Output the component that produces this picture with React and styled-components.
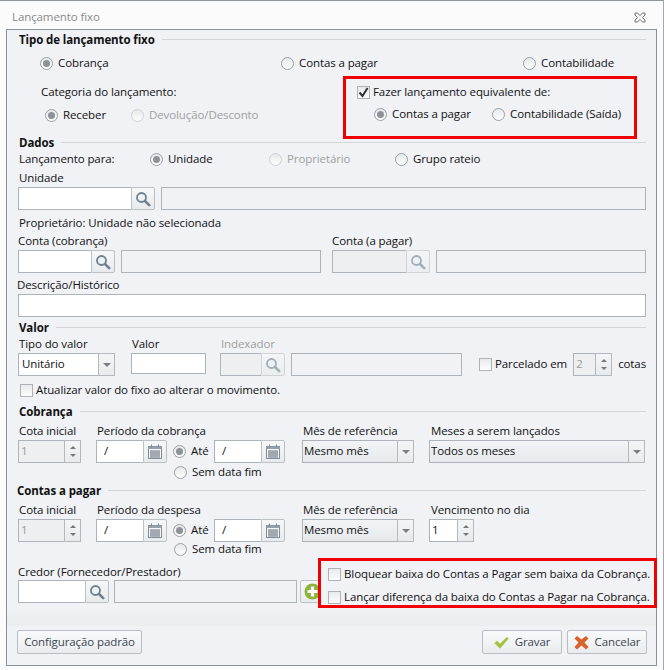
import React from 'react';
import styled, { createGlobalStyle } from 'styled-components';

const GlobalStyle = createGlobalStyle`
  html, body {
    margin: 0;
    background: #fbfbfc;
  }
  * {
    box-sizing: border-box;
  }
`;

const Window = styled.div`
  width: 664px;
  height: 670px;
  overflow: hidden;
  position: relative;
  background: #fbfbfc;
  border-top: 1px solid #8f949a;
  border-right: 1px solid #a4a8ad;
  font-family: "Open Sans", "Noto Sans", sans-serif;
  font-size: 11.5px;
  letter-spacing: -0.1px;
  color: #111;
`;

const TitleBar = styled.div`
  height: 28px;
  padding: 4px 17px 0 12px;
  display: flex;
  align-items: center;
  justify-content: space-between;
  color: #8a8a8a;
`;

const Panel = styled.div`
  position: relative;
  width: 651px;
  height: 637px;
  margin-left: 6px;
  padding-left: 11px;
  background: #f0f2f6;
  border: 1px solid #8b9199;
`;

const Row = styled.div`
  display: flex;
  align-items: center;
  height: ${({ $h }) => $h || 14}px;
  margin-top: ${({ $mt }) => $mt || 0}px;
  white-space: nowrap;
`;

const SectionRow = styled.div`
  display: flex;
  align-items: center;
  gap: 7px;
  height: ${({ $h }) => $h || 10}px;
  margin-top: ${({ $mt }) => $mt || 0}px;
  margin-left: ${({ $ml }) => $ml ?? 1}px;
  padding-right: 10px;
  font-weight: 700;
  white-space: nowrap;

  &::after {
    content: '';
    flex: 1;
    height: 1px;
    margin-top: -2px;
    background: #d3d7dc;
  }
`;

/* the font sits a pixel lower than the original's, the bottom margin lifts it */
const Text = styled.span`
  width: ${({ $w }) => ($w ? `${$w}px` : 'auto')};
  margin-left: ${({ $ml }) => $ml || 0}px;
  margin-bottom: 2px;
  flex: none;
  color: ${({ $off }) => ($off ? '#a0a0a0' : 'inherit')};
`;

const RadioWrap = styled.span`
  display: inline-flex;
  align-items: center;
  gap: 5px;
  flex: none;
  width: ${({ $w }) => ($w ? `${$w}px` : 'auto')};
  margin-left: ${({ $ml }) => $ml || 0}px;
  color: ${({ $off }) => ($off ? '#a0a0a0' : 'inherit')};
`;

const Dot = styled.span`
  position: relative;
  width: 13px;
  height: 13px;
  flex: none;
  border-radius: 50%;
  border: 1px solid ${({ $off }) => ($off ? '#cdd0d4' : '#9aa0a6')};
  background: linear-gradient(#e6e8ea, #fdfdfd);

  &::after {
    content: '';
    display: ${({ $on }) => ($on ? 'block' : 'none')};
    position: absolute;
    inset: 2px;
    border-radius: 50%;
    background: #8d9298;
  }
`;

const Box = styled.span`
  display: inline-flex;
  align-items: center;
  justify-content: center;
  width: 13px;
  height: 13px;
  flex: none;
  border: 1px solid #aeb3b9;
  background: linear-gradient(#e8eaec, #fdfdfd);
  margin-left: ${({ $ml }) => $ml || 0}px;
  margin-right: 3px;
`;

const Input = styled.div`
  flex: none;
  align-self: flex-start;
  width: ${({ $w }) => ($w ? `${$w}px` : '100%')};
  height: ${({ $h }) => $h || 23}px;
  margin-left: ${({ $ml }) => $ml || 0}px;
  background: ${({ $bg }) => $bg || '#fff'};
  border: 1px solid #adb3ba;
`;

const Group = styled.div`
  display: flex;
  flex: none;
  width: ${({ $w }) => $w}px;
  height: 23px;
  margin-left: ${({ $ml }) => $ml || 0}px;
`;

const GroupField = styled.div`
  flex: 1;
  display: flex;
  align-items: center;
  padding-left: ${({ $pad }) => $pad ?? 3}px;
  background: ${({ $bg }) => $bg || '#fff'};
  border: 1px solid #adb3ba;
  border-right: none;
  color: ${({ $off }) => ($off ? '#9a9a9a' : 'inherit')};
`;

const SideButton = styled.div`
  display: flex;
  align-items: center;
  justify-content: center;
  flex: none;
  width: 24px;
  background: linear-gradient(#f6f7f8, #e8ebee);
  border: 1px solid #bcc1c6;
  border-radius: 0 2px 2px 0;
  opacity: ${({ $off }) => ($off ? 0.6 : 1)};
`;

const AddButton = styled(SideButton)`
  height: 23px;
  margin-left: 3px;
  border-radius: 2px;
`;

const SpinCol = styled.div`
  display: flex;
  flex-direction: column;
  align-items: center;
  justify-content: center;
  gap: 5px;
  flex: none;
  width: 17px;
  background: linear-gradient(#f4f5f7, #e8ebee);
  border: 1px solid #b4b9bf;
`;

const Caret = styled.span`
  width: 0;
  height: 0;
  border-left: 3px solid transparent;
  border-right: 3px solid transparent;
  border-top: ${({ $up }) => ($up ? 'none' : '3px solid #777')};
  border-bottom: ${({ $up }) => ($up ? '3px solid #777' : 'none')};
`;

const SelectArrow = styled(Caret)`
  border-left-width: 4px;
  border-right-width: 4px;
  border-top-width: 4px;
  border-top-color: #7a7f85;
`;

const Block = styled.div`
  display: flex;
  height: 63px;
`;

const Categoria = styled.div`
  width: 326px;
  flex: none;
`;

const RedBox = styled.div`
  width: 294px;
  height: 63px;
  margin-left: -1px;
  padding: 5px 0 0 11px;
  border: 3px solid #f00000;
`;

const OverlayBox = styled.div`
  position: absolute;
  left: 311px;
  top: 528px;
  width: 339px;
  height: 50px;
  padding: 6px 0 0 7px;
  border: 3px solid #f00000;
  background: #f0f2f6;
  white-space: nowrap;
`;

const Band = styled.div`
  height: 16px;
  margin: 7px 0 0 -11px;
  background: linear-gradient(#f0f1f3, #ecedef);
`;

const Footer = styled.div`
  display: flex;
  align-items: center;
  height: 24px;
  margin-top: 4px;
  margin-left: -1px;
  padding-right: 9px;
`;

const FootButton = styled.div`
  display: flex;
  align-items: center;
  justify-content: center;
  gap: 6px;
  flex: none;
  width: ${({ $w }) => $w}px;
  height: 24px;
  margin-left: ${({ $ml }) => $ml || 0}px;
  border: 1px solid #b9bec4;
  border-radius: 2px;
  background: linear-gradient(#f9fafb, #e9ecef);
  color: #3a4650;
  ${({ $auto }) => ($auto ? 'margin-left: auto;' : '')}
`;

const Search = () => (
  <svg width="16" height="16" viewBox="0 0 16 16">
    <circle cx="6.5" cy="6.5" r="4.5" fill="#eef3f6" stroke="#71808c" strokeWidth="1.8" />
    <path d="M10 10l4.2 4.2" stroke="#71808c" strokeWidth="2.6" strokeLinecap="round" />
  </svg>
);

const Calendar = () => (
  <svg width="16" height="16" viewBox="0 0 16 16">
    <rect x="1.5" y="2.5" width="13" height="12" fill="#f4f5f6" stroke="#838c95" />
    <rect x="1.5" y="2.5" width="13" height="2.5" fill="#98a1a9" />
    <path d="M4.5 0.5v3M11.5 0.5v3" stroke="#7f8892" />
    <path
      d="M3 7h10M3 9h10M3 11h10M3 13h10M4 6.5v7M6 6.5v7M8 6.5v7M10 6.5v7M12 6.5v7"
      stroke="#7f8892"
      strokeWidth="0.9"
    />
  </svg>
);

const Plus = () => (
  <svg width="17" height="17" viewBox="0 0 17 17">
    <circle cx="8.5" cy="8.5" r="8" fill="#8db33a" />
    <path d="M8.5 3.5v10M3.5 8.5h10" stroke="#fff" strokeWidth="3.2" />
  </svg>
);

const Check = () => (
  <svg width="15" height="13" viewBox="0 0 15 13">
    <path d="M0.5 7l2.5-2 3 2.8L13 1l1.5 1.5L6 12.5z" fill="#a3bf3f" stroke="#c0d467" strokeWidth="0.6" />
  </svg>
);

const Cross = () => (
  <svg width="15" height="15" viewBox="0 0 15 15">
    <path d="M3 1l4.5 3.5L12 1l2.5 2.5L10.5 7.5l4 4.5-2.5 2.5-4.5-4-4.5 4L0.5 12l4-4.5L0.5 3.5z" fill="#d9622b" />
  </svg>
);

const CloseX = () => (
  <svg width="12" height="11" viewBox="0 0 12 11">
    <path
      d="M1 1h2.5L6 3.5 8.5 1H11v2L8.5 5.5 11 8v2H8.5L6 7.5 3.5 10H1V8l2.5-2.5L1 3z"
      fill="#f6f6f6"
      stroke="#6f6f6f"
      strokeWidth="1"
    />
  </svg>
);

const Tick = () => (
  <svg width="11" height="11" viewBox="0 0 11 11">
    <path d="M1.5 5.5l3 3.5 5-8" fill="none" stroke="#333" strokeWidth="2" />
  </svg>
);

const Section = ({ children, ...rest }) => (
  <SectionRow {...rest}>
    <Text>{children}</Text>
  </SectionRow>
);

const Radio = ({ on, off, children, w, ml }) => (
  <RadioWrap $off={off} $w={w} $ml={ml}>
    <Dot $on={on} $off={off} />
    <Text>{children}</Text>
  </RadioWrap>
);

const Lookup = ({ w, ml, off }) => (
  <Group $w={w} $ml={ml}>
    <GroupField $bg={off ? '#eeeff1' : '#fff'} />
    <SideButton $off={off}>
      <Search />
    </SideButton>
  </Group>
);

const DateField = ({ w, ml }) => (
  <Group $w={w} $ml={ml}>
    <GroupField $pad={7}>
      <Text>/</Text>
    </GroupField>
    <SideButton>
      <Calendar />
    </SideButton>
  </Group>
);

const Spinner = ({ w, ml, off, value }) => (
  <Group $w={w} $ml={ml}>
    <GroupField $off={off} $bg={off ? '#eeeff1' : '#fff'} $pad={2}>
      <Text>{value}</Text>
    </GroupField>
    <SpinCol>
      <Caret $up />
      <Caret />
    </SpinCol>
  </Group>
);

const Select = ({ w, ml, bg, pad, children }) => (
  <Group $w={w} $ml={ml}>
    <GroupField $bg={bg} $pad={pad}>
      <Text>{children}</Text>
    </GroupField>
    <SpinCol>
      <SelectArrow />
    </SpinCol>
  </Group>
);

const grey = 'linear-gradient(#f2f4f6, #e6e9ec)';

const App = () => (
  <>
    <GlobalStyle />
    <Window>
      <TitleBar>
        <Text>Lançamento fixo</Text>
        <CloseX />
      </TitleBar>
      <Panel>
        <Section $h={20}>Tipo de lançamento fixo</Section>
        <Row $h={26}>
          <Radio on w={241} ml={22}>Cobrança</Radio>
          <Radio w={242}>Contas a pagar</Radio>
          <Radio>Contabilidade</Radio>
        </Row>
        <Block>
          <Categoria>
            <Row $mt={9}>
              <Text $ml={23}>Categoria do lançamento:</Text>
            </Row>
            <Row $mt={9}>
              <Radio on w={86} ml={27}>Receber</Radio>
              <Radio off>Devolução/Desconto</Radio>
            </Row>
          </Categoria>
          <RedBox>
            <Row $h={16}>
              <Box><Tick /></Box>
              <Text>Fazer lançamento equivalente de:</Text>
            </Row>
            <Row $mt={7}>
              <Radio on w={118} ml={17}>Contas a pagar</Radio>
              <Radio>Contabilidade (Saída)</Radio>
            </Row>
          </RedBox>
        </Block>
        <Section $h={8}>Dados</Section>
        <Row $h={24}>
          <Text $w={131} $ml={1}>Lançamento para:</Text>
          <Radio on w={119}>Unidade</Radio>
          <Radio off w={126}>Proprietário</Radio>
          <Radio>Grupo rateio</Radio>
        </Row>
        <Row><Text $ml={1}>Unidade</Text></Row>
        <Row $h={23} $mt={2}>
          <Lookup w={137} />
          <Input $w={485} $ml={6} $bg="#f0f2f6" />
        </Row>
        <Row $mt={6}><Text $ml={1}>Proprietário: Unidade não selecionada</Text></Row>
        <Row $mt={4}>
          <Text $w={314}>Conta (cobrança)</Text>
          <Text>Conta (a pagar)</Text>
        </Row>
        <Row $h={23} $mt={2}>
          <Lookup w={97} />
          <Input $w={200} $ml={6} $bg="#f0f2f6" />
          <Lookup w={98} ml={11} off />
          <Input $w={210} $ml={6} $bg="#f0f2f6" />
        </Row>
        <Row $mt={5}><Text $ml={-1}>Descrição/Histórico</Text></Row>
        <Row $h={23} $mt={2}>
          <Input $w={628} />
        </Row>
        <Section $mt={6}>Valor</Section>
        <Row $mt={4}>
          <Text $w={113} $ml={1}>Tipo do valor</Text>
          <Text $w={89}>Valor</Text>
          <Text $off>Indexador</Text>
        </Row>
        <Row $h={23} $mt={2}>
          <Select w={97}>Unitário</Select>
          <Input $w={75} $h={21} $ml={16} />
          <Lookup w={65} ml={14} off />
          <Input $w={171} $ml={6} $bg="#f0f2f6" />
          <Box $ml={17} />
          <Text>Parcelado em</Text>
          <Spinner w={39} ml={6} off value="2" />
          <Text $ml={6}>cotas</Text>
        </Row>
        <Row $mt={7}>
          <Box $ml={2} />
          <Text>Atualizar valor do fixo ao alterar o movimento.</Text>
        </Row>
        <Section $mt={10}>Cobrança</Section>
        <Row $mt={7}>
          <Text $w={78} $ml={1}>Cota inicial</Text>
          <Text $w={206}>Período da cobrança</Text>
          <Text $w={128}>Mês de referência</Text>
          <Text>Meses a serem lançados</Text>
        </Row>
        <Row $h={23} $mt={2}>
          <Spinner w={63} off value="1" />
          <DateField w={71} ml={15} />
          <Radio on ml={6} w={42}>Até</Radio>
          <DateField w={71} ml={-1} />
          <Select w={112} ml={17} bg={grey} pad={1}>Mesmo mês</Select>
          <Select w={216} ml={15} bg={grey} pad={1}>Todos os meses</Select>
        </Row>
        <Row $mt={2}>
          <Radio ml={156}>Sem data fim</Radio>
        </Row>
        <Section $mt={7} $ml={-1}>Contas a pagar</Section>
        <Row $mt={7}>
          <Text $w={78} $ml={1}>Cota inicial</Text>
          <Text $w={206}>Período da despesa</Text>
          <Text $w={128}>Mês de referência</Text>
          <Text>Vencimento no dia</Text>
        </Row>
        <Row $h={23} $mt={2}>
          <Spinner w={63} off value="1" />
          <DateField w={71} ml={15} />
          <Radio on ml={6} w={42}>Até</Radio>
          <DateField w={71} ml={-1} />
          <Select w={112} ml={17} bg={grey} pad={1}>Mesmo mês</Select>
          <Spinner w={45} ml={15} value="1" />
        </Row>
        <Row>
          <Radio ml={156}>Sem data fim</Radio>
        </Row>
        <Row $mt={9}><Text>Credor (Fornecedor/Prestador)</Text></Row>
        <Row $h={23} $mt={1}>
          <Lookup w={91} />
          <Input $w={183} $ml={5} $bg="#f0f2f6" />
          <AddButton>
            <Plus />
          </AddButton>
        </Row>
        <OverlayBox>
          <Row>
            <Box />
            <Text>Bloquear baixa do Contas a Pagar sem baixa da Cobrança.</Text>
          </Row>
          <Row $mt={9}>
            <Box />
            <Text>Lançar diferença da baixa do Contas a Pagar na Cobrança.</Text>
          </Row>
        </OverlayBox>
        <Band />
        <Footer>
          <FootButton $w={125}><Text>Configuração padrão</Text></FootButton>
          <FootButton $w={80} $auto><Check /><Text>Gravar</Text></FootButton>
          <FootButton $w={80} $ml={5}><Cross /><Text>Cancelar</Text></FootButton>
        </Footer>
      </Panel>
    </Window>
  </>
);

export default App;
